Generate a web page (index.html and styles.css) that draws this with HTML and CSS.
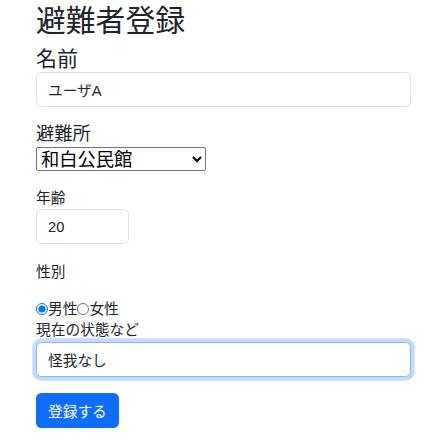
FILE: index.html
```html
<!DOCTYPE html>
<html lang="ja">
<head>
<meta charset="utf-8">
<title>避難者登録</title>
<link rel="stylesheet" href="styles.css">
</head>
<body>
<main class="page">
  <h1 class="title">避難者登録</h1>
  <form class="form">
    <div class="field field-name">
      <label class="label label-lg" for="name">名前</label>
      <input class="control control-full" id="name" type="text" value="ユーザA">
    </div>
    <div class="field field-shelter">
      <label class="label label-md" for="shelter">避難所</label>
      <select class="select" id="shelter">
        <option>和白公民館</option>
      </select>
    </div>
    <div class="field field-age">
      <label class="label" for="age">年齢</label>
      <input class="control control-short" id="age" type="text" value="20">
    </div>
    <div class="field field-gender">
      <div class="label">性別</div>
      <div class="radios">
        <input class="radio" type="radio" name="gender" id="male" checked><label for="male">男性</label><input class="radio" type="radio" name="gender" id="female"><label for="female">女性</label>
      </div>
    </div>
    <div class="field field-status">
      <label class="label" for="status">現在の状態など</label>
      <input class="control control-full control-focus" id="status" type="text" value="怪我なし">
    </div>
    <button class="btn" type="button">登録する</button>
  </form>
</main>
</body>
</html>
```
FILE: styles.css
```css
* { box-sizing: border-box; }
html, body { margin: 0; padding: 0; background: #fff; }
body {
  font-family: "Liberation Sans", "Noto Sans CJK JP", sans-serif;
  color: #212529;
  font-size: 14.7px;
}
.page { padding: 3px 37px 0 36px; }
.title {
  margin: 0 0 7px;
  font-size: 29.8px;
  line-height: 36px;
  font-weight: 400;
}
.form { display: flex; flex-direction: column; align-items: flex-start; }
.field { display: flex; flex-direction: column; align-items: flex-start; width: 100%; }
.label { display: block; font-size: 14.7px; line-height: 18px; }
.label-lg { font-size: 21px; line-height: 25px; }
.label-md { font-size: 18.3px; line-height: 22px; }
.field-name .control { margin-top: 1px; }
.field-shelter { margin-top: 16px; }
.field-shelter .select { margin-top: 2px; }
.field-age { margin-top: 18px; }
.field-age .control { margin-top: 2px; }
.field-gender { margin-top: 19px; }
.field-status { margin-top: 3px; }
.field-status .control { margin-top: 3px; }
.control {
  height: 35px;
  padding: 0 11px;
  border: 1px solid #dee2e6;
  border-radius: 5.5px;
  font: inherit;
  font-size: 14.7px;
  color: #212529;
  background: #fff;
  outline: none;
}
.control-full { width: 100%; }
.control-short { width: 93px; }
.control-focus {
  border-color: #86b7fe;
  box-shadow: 0 0 0 3.7px rgba(13, 110, 253, .25);
}
.select {
  width: 170px;
  height: 24px;
  font-family: "Liberation Sans", "Noto Sans CJK JP", sans-serif;
  font-size: 18.3px;
  color: #000;
}
.radios {
  display: flex;
  align-items: center;
  margin-top: 19px;
  height: 18px;
  line-height: 18px;
}
.radio { margin: 0; width: 12px; height: 12px; }
.btn {
  margin-top: 16px;
  height: 35px;
  padding: 0 12px;
  border: 0;
  border-radius: 5.5px;
  background: #0d6efd;
  color: #fff;
  font: inherit;
  font-size: 14.7px;
}
```
